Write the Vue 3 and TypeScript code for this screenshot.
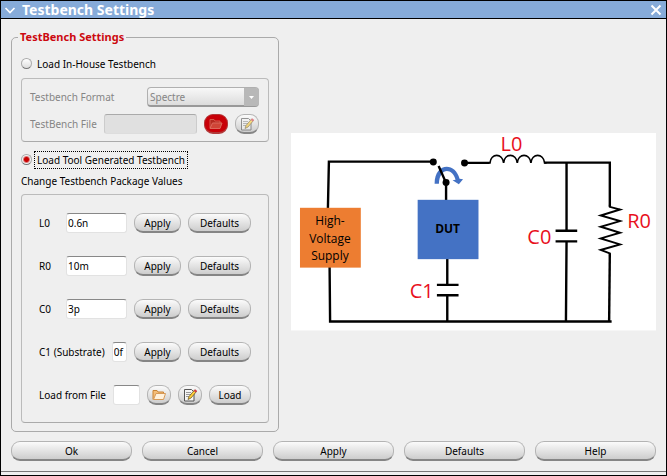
<script setup lang="ts">
import { ref } from 'vue'

interface PackageValue {
  id: string
  label: string
  value: string
}

const mode = ref<'inhouse' | 'generated'>('generated')
const format = ref('Spectre')
const inHouseFile = ref('')
const packageFile = ref('')
const values = ref<PackageValue[]>([
  { id: 'l0', label: 'L0', value: '0.6n' },
  { id: 'r0', label: 'R0', value: '10m' },
  { id: 'c0', label: 'C0', value: '3p' },
  { id: 'c1', label: 'C1 (Substrate)', value: '0f' },
])
const actions = ['Ok', 'Cancel', 'Apply', 'Defaults', 'Help']
</script>

<template>
  <div class="window">
    <header class="titlebar">
      <button class="title-button" type="button" aria-label="Window menu">
        <svg width="12" height="12" viewBox="0 0 12 12"><path d="M1.500 4 6 8.500 10.500 4" fill="none" stroke="#fff" stroke-width="1.700" /></svg>
      </button>
      <h1>Testbench Settings</h1>
      <button class="title-button" type="button" aria-label="Close">
        <svg width="12" height="12" viewBox="0 0 12 12"><path d="M1.500 1.500 10.500 10.500M10.500 1.500 1.500 10.500" fill="none" stroke="#fff" stroke-width="2" /></svg>
      </button>
    </header>

    <main class="body">
      <div class="content">
        <fieldset class="settings">
          <legend>TestBench Settings</legend>

          <label class="choice">
            <input v-model="mode" type="radio" name="mode" value="inhouse" />
            <span>Load In-House Testbench</span>
          </label>

          <div class="group in-house">
            <div class="row">
              <label class="wide-label" for="format">Testbench Format</label>
              <div class="select">
                <select id="format" v-model="format" :disabled="mode !== 'inhouse'">
                  <option>Spectre</option>
                </select>
                <svg class="select-arrow" width="15" height="18" viewBox="0 0 15 18"><path d="M5 8h5l-2.500 3z" fill="#fff" /></svg>
              </div>
            </div>
            <div class="row file-row">
              <label for="inhouse-file">TestBench File</label>
              <input id="inhouse-file" v-model="inHouseFile" class="field" type="text" :disabled="mode !== 'inhouse'" />
              <button class="pill icon red" type="button" aria-label="Browse" :disabled="mode !== 'inhouse'">
                <svg width="14" height="12" viewBox="0 0 14 12">
                  <path d="M1 10V1.500h4l1 1.500h5v2" fill="#b52a20" stroke="#d8584a" />
                  <path d="M1 10.500 3.500 5h9.500l-2 5.500z" fill="#cf4537" stroke="#dc6a5c" />
                </svg>
              </button>
              <button class="pill icon" type="button" aria-label="Edit" :disabled="mode !== 'inhouse'">
                <svg class="faded" width="15" height="14" viewBox="0 0 15 14">
                  <path d="M1.500 1.500h7l2.500 2.500v9H1.500z" fill="#f4f4f4" stroke="#555" />
                  <path d="M3 4.500h5M3 6.500h5M3 8.500h3" stroke="#999" />
                  <path d="M5 11.500 6 8.500 11.500 2l2 1.500L8 10z" fill="#ffcf3a" stroke="#5d4b1a" stroke-width=".7" />
                  <path d="m10.700 3 1.500-1.700 2 1.600-1.400 1.600z" fill="#d53a48" />
                </svg>
              </button>
            </div>
          </div>

          <label class="choice second">
            <input v-model="mode" type="radio" name="mode" value="generated" />
            <span :class="{ focused: mode === 'generated' }">Load Tool Generated Testbench</span>
          </label>

          <p class="caption">Change Testbench Package Values</p>

          <div class="group package">
            <div v-for="item in values" :key="item.id" class="row">
              <label :for="item.id">{{ item.label }}</label>
              <input :id="item.id" v-model="item.value" class="field" type="text" />
              <button class="pill apply" type="button">Apply</button>
              <button class="pill defaults" type="button">Defaults</button>
            </div>
            <div class="row">
              <label for="package-file">Load from File</label>
              <input id="package-file" v-model="packageFile" class="field" type="text" />
              <button class="pill icon" type="button" aria-label="Browse">
                <svg width="14" height="12" viewBox="0 0 14 12">
                  <path d="M1 10.500V1.500h4l1 1.500h5.500v2" fill="#f4bd78" stroke="#c98334" />
                  <path d="M1.500 10.500 4 4.500h9.500l-2 6z" fill="#fff1dc" stroke="#d79a58" />
                </svg>
              </button>
              <button class="pill icon" type="button" aria-label="Edit">
                <svg width="15" height="14" viewBox="0 0 15 14">
                  <path d="M1.500 1.500h7l2.500 2.500v9H1.500z" fill="#f4f4f4" stroke="#555" />
                  <path d="M3 4.500h5M3 6.500h5M3 8.500h3" stroke="#999" />
                  <path d="M5 11.500 6 8.500 11.500 2l2 1.500L8 10z" fill="#ffcf3a" stroke="#5d4b1a" stroke-width=".7" />
                  <path d="m10.700 3 1.500-1.700 2 1.600-1.400 1.600z" fill="#d53a48" />
                </svg>
              </button>
              <button class="pill load" type="button">Load</button>
            </div>
          </div>
        </fieldset>

        <svg class="circuit" viewBox="0 0 366 198" role="img" aria-label="Testbench circuit">
          <rect width="366" height="198" fill="#fff" />
          <g fill="none" stroke="#000" stroke-width="2.400">
            <path d="M37 76 38 28.700H143M38.700 134 39.200 189H321.500" />
            <path d="M155.500 50V68M156.700 126V152M156.700 163V189" />
            <path d="M146.300 152.300H168M146.300 162.700H168" />
            <path d="M174 30H199M254 29.700H319.700V74M276.300 30V98M276.300 109 275.700 189" />
            <path d="M265.300 98H287M265.300 108.700H287" />
            <path d="M319.700 120.500 319 189" />
          </g>
          <path d="M198 30h1.500c1-10 12.500-10 13.700 0 1-10 12.500-10 13.700 0 1-10 12.500-10 13.700 0 1-10 12.500-10 13.700 0h2" fill="none" stroke="#000" stroke-width="1.700" />
          <path d="M319.700 72V74L330 76.700 310.500 82.700 330 88.300 310.500 94 330 100 310.500 105.700 330 111.700 310.500 117.300 319.700 120.700V123" fill="none" stroke="#000" stroke-width="1.900" />
          <path d="M144 51C144 29 165 29 169 46L172.500 46.500 168.300 51.500 162 47.500 165 47C162 35 149 34 148.300 51Z" fill="#4472c4" />
          <path d="M148 33 155.500 50" stroke="#000" stroke-width="2.400" />
          <circle cx="142.700" cy="29" r="3.500" />
          <circle cx="174" cy="30" r="3.500" />
          <circle cx="155.500" cy="49.700" r="3.500" />
          <rect x="9" y="75" width="61" height="60" fill="#ed7d31" />
          <rect x="127" y="67" width="61" height="59.500" fill="#4472c4" />
          <g class="block-text" text-anchor="middle">
            <text x="39" y="92">High-</text>
            <text x="39" y="110">Voltage</text>
            <text x="39" y="127">Supply</text>
            <text class="strong" x="157" y="100">DUT</text>
          </g>
          <g class="part-text" text-anchor="middle">
            <text x="221" y="18">L0</text>
            <text x="349" y="95">R0</text>
            <text x="249" y="111">C0</text>
            <text x="131" y="165">C1</text>
          </g>
        </svg>
      </div>

      <footer class="actions">
        <button v-for="action in actions" :key="action" class="pill" type="button">{{ action }}</button>
      </footer>
    </main>
  </div>
</template>

<style>
body {
  margin: 0;
  background: #efefef;
}
</style>

<style scoped>
.window {
  box-sizing: border-box;
  display: flex;
  flex-direction: column;
  min-height: 100vh;
  border: 1px solid #000;
  background: #efefef;
  color: #000;
  font: 10px/16px 'Noto Sans', 'Open Sans', sans-serif;
}

.titlebar {
  display: flex;
  align-items: center;
  gap: 6px;
  height: 17px;
  padding: 0 4px 0 3px;
  border-bottom: 1px solid #000;
  background: #86abd9;
}

.titlebar h1 {
  flex: 1;
  margin: 0;
  color: #fff;
  font: bold 14px/16px 'Noto Sans', sans-serif;
}

.title-button {
  display: flex;
  padding: 0;
  border: 0;
  background: none;
}

.body {
  display: flex;
  flex: 1;
  flex-direction: column;
  gap: 9px;
  padding: 10px 10px 9px;
  border-bottom: 1px solid #777;
  margin-bottom: 3px;
}

.content {
  display: flex;
  gap: 12px;
}

.settings {
  box-sizing: border-box;
  flex: 0 0 268px;
  min-width: 0;
  margin: 0;
  padding: 9px 9px 8px;
  border: 1px solid #aaa;
  border-radius: 5px;
}

.settings legend {
  margin-left: -3px;
  padding: 0 2px;
  color: #cc0910;
  font-size: 11px;
  font-weight: bold;
}

.choice {
  display: flex;
  align-items: center;
  gap: 2px;
  height: 19px;
}

.choice span {
  padding: 0 2px;
  border: 1px dotted transparent;
}

.choice .focused {
  border-color: #000;
}

.choice input {
  appearance: none;
  width: 11px;
  height: 11px;
  margin: 0;
  border: 1px solid #aaa;
  border-bottom-color: #777;
  border-radius: 50%;
  background: linear-gradient(#fff, #ddd);
}

.choice input:checked {
  background: radial-gradient(circle, #c80000 0 2px, #f4f4f4 4px);
}

.second {
  margin-top: 8px;
}

.group {
  display: flex;
  flex-direction: column;
  border: 1px solid #bbb;
  border-bottom-color: #aaa;
  border-radius: 4px;
}

.in-house {
  gap: 7px;
  margin-top: 5px;
  padding: 8px 9px 7px 8px;
  color: #858585;
}

.package {
  gap: 23px;
  padding: 18px 17px 17px;
}

.caption {
  margin: 4px 0 5px;
}

.row {
  display: flex;
  align-items: center;
  gap: 7px;
  height: 20px;
}

.row label {
  flex: none;
  min-width: 20px;
}

.row .wide-label {
  flex: 1;
}

.select {
  display: flex;
  position: relative;
  width: 112px;
  height: 20px;
}

.select select {
  box-sizing: border-box;
  appearance: none;
  width: 100%;
  padding: 0 2px;
  border: 1px solid #b0b0b0;
  border-bottom: 2px solid #999;
  border-radius: 4px;
  background: linear-gradient(#f8f8f8, #dcdcdc);
  color: #858585;
  font: inherit;
  opacity: 1;
}

.select-arrow {
  position: absolute;
  top: 1px;
  right: 0;
  border-radius: 0 3px 3px 0;
  background: #b8b8b8;
  pointer-events: none;
}

.field {
  box-sizing: border-box;
  flex: 1;
  width: 0;
  min-width: 0;
  height: 20px;
  padding: 0 1px;
  border: 1px solid #e2e2e2;
  border-top: 1px solid #888;
  border-radius: 3px;
  background: #fff;
  color: #000;
  font: inherit;
}

.field:disabled {
  border-color: #aaa #ccc #ddd;
  background: #e0e0e0;
}

.pill {
  box-sizing: border-box;
  display: flex;
  align-items: center;
  justify-content: center;
  height: 20px;
  padding: 0;
  border: 1px solid #b4b4b4;
  border-bottom: 2px solid #858585;
  border-radius: 9px;
  background: linear-gradient(#fbfbfb, #cdcdcd);
  color: #000;
  font: inherit;
}

.apply {
  flex: 0 0 47px;
}

.defaults {
  flex: 0 0 63px;
}

.load {
  flex: 0 0 42px;
}

.icon {
  flex: 0 0 24px;
}

.red {
  border-color: #b23a3a;
  background: #c80008;
}

.faded {
  opacity: 0.6;
}

.circuit {
  flex: 1;
  align-self: center;
  min-width: 0;
  margin-top: 2px;
  overflow: visible;
}

.block-text {
  font: 12px 'Open Sans', sans-serif;
}

.block-text .strong {
  font-weight: bold;
}

.part-text {
  fill: #e8101c;
  font: 20px 'Open Sans', sans-serif;
}

.actions {
  display: grid;
  grid-template-columns: repeat(5, 1fr);
  gap: 10px;
}
</style>
